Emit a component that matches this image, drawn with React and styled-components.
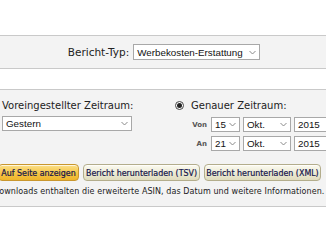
import React from "react";
import styled, { createGlobalStyle } from "styled-components";

const Global = createGlobalStyle`
  html, body {
    margin: 0;
    padding: 0;
    background: #fff;
    overflow: hidden;
  }
  body {
    width: 326px;
    height: 245px;
    font-family: "DejaVu Sans", Verdana, sans-serif;
    color: #222;
  }
`;

const Page = styled.div`
  padding-top: 35px;
`;

const Band = styled.div`
  background: #f3f3f3;
  border-top: 1px solid #c9c9c9;
  border-bottom: 1px solid #c9c9c9;
`;

const TypeBand = styled(Band)`
  height: 32px;
  display: flex;
  align-items: center;
  justify-content: center;
  gap: 4px;
  padding-left: 2px;
`;

const RangeBand = styled(Band)`
  margin-top: 20px;
  height: 118px;
  padding-top: 10px;
  box-sizing: border-box;
  overflow: hidden;
`;

const Label = styled.span`
  font-size: ${(p) => p.size || 10}px;
  white-space: nowrap;
`;

const Select = styled.div`
  width: ${(p) => p.w}px;
  height: ${(p) => p.h || 15}px;
  box-sizing: border-box;
  border: 1px solid #a8a8a8;
  background: #fff;
  display: flex;
  align-items: center;
  justify-content: space-between;
  padding: 0 3px 0 3px;
  font-family: "Liberation Sans", Arial, sans-serif;
  font-size: 9.8px;
  color: #111;
  flex-shrink: 0;
  white-space: nowrap;
  overflow: hidden;
`;

const Chevron = () => (
  <svg width="7" height="5" viewBox="0 0 7 5">
    <path d="M0.5 1 L3.5 4 L6.5 1" fill="none" stroke="#8a8a8a" strokeWidth="1" />
  </svg>
);

const Dropdown = ({ value, w, h }) => (
  <Select w={w} h={h}>
    <span>{value}</span>
    <Chevron />
  </Select>
);

const Columns = styled.div`
  display: grid;
  grid-template-columns: 173px 1fr;
  padding-left: 2px;
`;

const Column = styled.div`
  display: flex;
  flex-direction: column;
  gap: ${(p) => p.gap || 0}px;
`;

const RadioRow = styled.div`
  display: flex;
  align-items: center;
  gap: 7px;
`;

const Radio = styled.span`
  width: 9px;
  height: 9px;
  box-sizing: border-box;
  border-radius: 50%;
  border: 1px solid #444;
  background: #fff;
  display: flex;
  align-items: center;
  justify-content: center;
  &::after {
    content: "";
    width: 5px;
    height: 5px;
    border-radius: 50%;
    background: #222;
  }
`;

const DateRows = styled.div`
  display: flex;
  flex-direction: column;
  gap: 4px;
  margin-top: 6px;
`;

const DateRow = styled.div`
  display: flex;
  align-items: center;
  gap: 3px;
`;

const SmallLabel = styled.span`
  width: 32px;
  text-align: right;
  font-size: 7px;
  font-weight: bold;
  color: #555;
  padding-right: 1px;
`;

const Buttons = styled.div`
  display: flex;
  gap: 4px;
  margin: 13px 0 0 -2px;
`;

const Button = styled.div`
  height: 17px;
  box-sizing: border-box;
  border-radius: 4px;
  display: flex;
  align-items: center;
  justify-content: center;
  width: ${(p) => p.w}px;
  flex-shrink: 0;
  font-family: "DejaVu Sans Condensed", "DejaVu Sans", sans-serif;
  font-size: 8.8px;
  color: #14144a;
  -webkit-text-stroke: 0.2px #14144a;
  white-space: nowrap;
  border: 1px solid ${(p) => (p.primary ? "#c9972e" : "#b3ad8c")};
  background: ${(p) =>
    p.primary
      ? "linear-gradient(#fbe08a, #f5c445 55%, #eeb52c)"
      : "linear-gradient(#fbfaf0, #ecead4 55%, #e0dcbd)"};
  box-shadow: inset 0 1px 0 rgba(255, 255, 255, 0.7);
`;

const Note = styled.div`
  margin: 6px 0 0 -7px;
  font-size: 8px;
  letter-spacing: 0.08px;
  white-space: nowrap;
  color: #222;
`;

export default function App() {
  return (
    <>
      <Global />
      <Page>
        <TypeBand>
          <Label size={10.5}>Bericht-Typ:</Label>
          <Dropdown value="Werbekosten-Erstattung" w={127} h={16} />
        </TypeBand>
        <RangeBand>
          <Columns>
            <Column gap={5}>
              <Label>Voreingestellter Zeitraum:</Label>
              <Dropdown value="Gestern" w={130} />
            </Column>
            <Column>
              <RadioRow>
                <Radio />
                <Label>Genauer Zeitraum:</Label>
              </RadioRow>
              <DateRows>
                <DateRow>
                  <SmallLabel>Von</SmallLabel>
                  <Dropdown value="15" w={29} />
                  <Dropdown value="Okt." w={48} />
                  <Dropdown value="2015" w={48} />
                </DateRow>
                <DateRow>
                  <SmallLabel>An</SmallLabel>
                  <Dropdown value="21" w={29} />
                  <Dropdown value="Okt." w={48} />
                  <Dropdown value="2015" w={48} />
                </DateRow>
              </DateRows>
            </Column>
          </Columns>
          <Buttons>
            <Button primary w={81}>Auf Seite anzeigen</Button>
            <Button w={117}>Bericht herunterladen (TSV)</Button>
            <Button w={117}>Bericht herunterladen (XML)</Button>
          </Buttons>
          <Note>Downloads enthalten die erweiterte ASIN, das Datum und weitere Informationen.</Note>
        </RangeBand>
      </Page>
    </>
  );
}
